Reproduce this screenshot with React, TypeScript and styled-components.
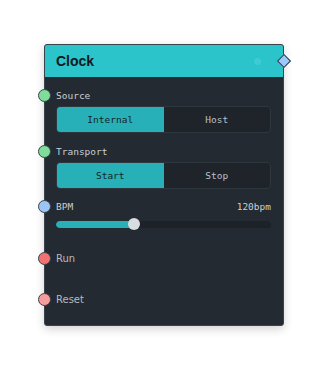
import React from 'react'
import styled, { createGlobalStyle } from 'styled-components'

const GlobalStyle = createGlobalStyle`
  html, body {
    margin: 0;
    padding: 0;
    background: #ffffff;
  }
`

const Page = styled.div`
  width: 328px;
  height: 370px;
  padding: 44px 0 0 44px;
  box-sizing: border-box;
`

const Node = styled.div`
  position: relative;
  width: 240px;
  height: 282px;
  background: #232a31;
  border: 1px solid #3a434b;
  border-radius: 3px;
  box-sizing: border-box;
  box-shadow: 0 3px 10px rgba(0, 0, 0, 0.18);
  display: flex;
  flex-direction: column;
`

const Header = styled.div`
  position: relative;
  height: 32px;
  background: #2bc4cb;
  border-radius: 2px 2px 0 0;
  display: flex;
  align-items: center;
  justify-content: space-between;
  padding: 0 22px 0 11px;
`

const Title = styled.span`
  font-family: 'Liberation Sans', Arial, sans-serif;
  font-weight: 700;
  font-size: 14px;
  color: #10181d;
`

const Dot = styled.span`
  width: 7px;
  height: 7px;
  border-radius: 50%;
  background: #4dd0d5;
  opacity: 0.6;
`

const Diamond = styled.span`
  position: absolute;
  right: -6px;
  top: 11px;
  width: 8px;
  height: 8px;
  background: #9cc8fb;
  border: 1px solid #2a3540;
  transform: rotate(45deg);
`

const Body = styled.div`
  display: flex;
  flex-direction: column;
  padding: 11px 12px 0 11px;
`

const Field = styled.div<{ $mt?: number }>`
  display: flex;
  flex-direction: column;
  gap: 4px;
  margin-top: ${({ $mt }) => $mt ?? 0}px;
`

const LabelRow = styled.div`
  position: relative;
  height: 14px;
  display: flex;
  align-items: center;
  justify-content: space-between;
`

const Port = styled.span<{ $color: string }>`
  position: absolute;
  left: -18px;
  top: 1px;
  width: 11px;
  height: 11px;
  border-radius: 50%;
  background: ${({ $color }) => $color};
  border: 1px solid #3b4248;
`

const MonoLabel = styled.span`
  font-family: 'DejaVu Sans Mono', monospace;
  font-size: 9.5px;
  color: #c9ced3;
`

const SansLabel = styled.span`
  font-family: 'DejaVu Sans', sans-serif;
  font-size: 10px;
  color: #b5bbc1;
`

const Segmented = styled.div`
  display: grid;
  grid-template-columns: 1fr 1fr;
  height: 27px;
  border: 1px solid #2e363e;
  border-radius: 4px;
  overflow: hidden;
  background: #1e242a;
  box-sizing: border-box;
`

const Segment = styled.div<{ $active?: boolean }>`
  display: flex;
  align-items: center;
  justify-content: center;
  font-family: 'DejaVu Sans Mono', monospace;
  font-size: 9.5px;
  background: ${({ $active }) => ($active ? '#27b0b7' : 'transparent')};
  color: ${({ $active }) => ($active ? '#13262a' : '#b9c0c6')};
`

const SliderWrap = styled.div`
  position: relative;
  height: 14px;
  display: flex;
  align-items: center;
`

const Track = styled.div`
  width: 100%;
  height: 7px;
  border-radius: 4px;
  background: #1c2227;
  overflow: hidden;
`

const Fill = styled.div`
  height: 100%;
  background: #27b0b7;
  border-radius: 4px;
`

const Thumb = styled.span`
  position: absolute;
  top: 1px;
  width: 12px;
  height: 12px;
  margin-left: -6px;
  border-radius: 50%;
  background: #d8dde2;
`

export default function App() {
  const pct = 36.5
  return (
    <>
      <GlobalStyle />
      <Page>
        <Node>
          <Header>
            <Title>Clock</Title>
            <Dot />
            <Diamond />
          </Header>
          <Body>
            <Field>
              <LabelRow>
                <Port $color="#7fdc9b" />
                <MonoLabel>Source</MonoLabel>
              </LabelRow>
              <Segmented>
                <Segment $active>Internal</Segment>
                <Segment>Host</Segment>
              </Segmented>
            </Field>
            <Field $mt={11}>
              <LabelRow>
                <Port $color="#7fdc9b" />
                <MonoLabel>Transport</MonoLabel>
              </LabelRow>
              <Segmented>
                <Segment $active>Start</Segment>
                <Segment>Stop</Segment>
              </Segmented>
            </Field>
            <Field $mt={10}>
              <LabelRow>
                <Port $color="#9cc5f7" />
                <MonoLabel>BPM</MonoLabel>
                <MonoLabel>120bpm</MonoLabel>
              </LabelRow>
              <SliderWrap>
                <Track>
                  <Fill style={{ width: `${pct}%` }} />
                </Track>
                <Thumb style={{ left: `${pct}%` }} />
              </SliderWrap>
            </Field>
            <Field $mt={20}>
              <LabelRow>
                <Port $color="#f07272" />
                <SansLabel>Run</SansLabel>
              </LabelRow>
            </Field>
            <Field $mt={27}>
              <LabelRow>
                <Port $color="#f59d9d" />
                <SansLabel>Reset</SansLabel>
              </LabelRow>
            </Field>
          </Body>
        </Node>
      </Page>
    </>
  )
}
